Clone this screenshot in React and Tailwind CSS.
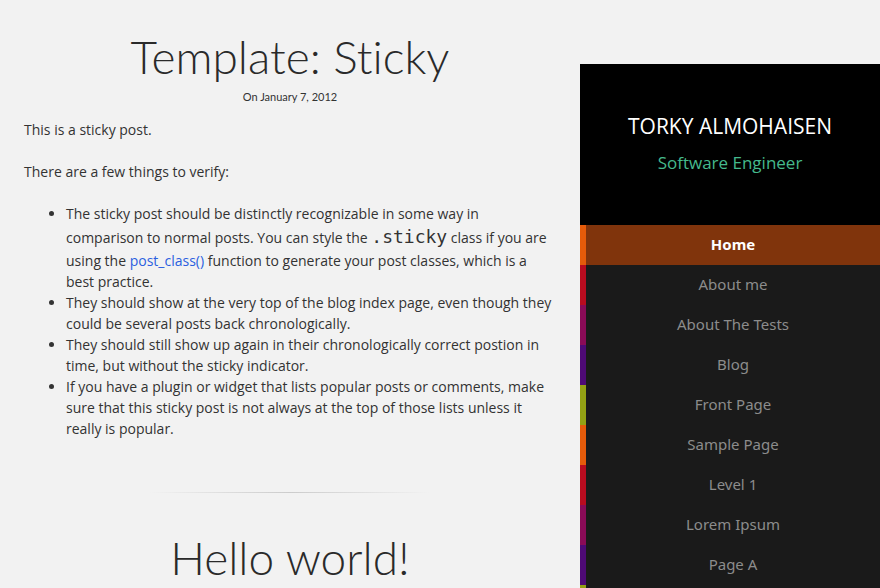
import React from "react";

// Sidebar navigation items with their accent stripe colours
const navItems = [
  { label: "Home", stripe: "bg-[#e55b0a]", active: true },
  { label: "About me", stripe: "bg-[#b80c1f]" },
  { label: "About The Tests", stripe: "bg-[#8a0b57]" },
  { label: "Blog", stripe: "bg-[#4e0a76]" },
  { label: "Front Page", stripe: "bg-[#93a114]" },
  { label: "Sample Page", stripe: "bg-[#e55b0a]" },
  { label: "Level 1", stripe: "bg-[#b80c1f]" },
  { label: "Lorem Ipsum", stripe: "bg-[#8a0b57]" },
  { label: "Page A", stripe: "bg-[#4e0a76]" },
  { label: "Page B", stripe: "bg-[#93a114]" },
];

function Post() {
  return (
    <article className="px-6">
      <h1 className="pt-[29px] text-center text-[46px] leading-[56px] font-light text-[#2a2a2a] font-['Lato',sans-serif] [font-variant-ligatures:none]">
        Template: Sticky
      </h1>
      <div className="mt-[4px] text-center text-[11px] text-[#333] font-['Lato',sans-serif]">
        On January 7, 2012
      </div>
      <div className="mt-[13px] text-[14px] leading-[21px] text-[#333] font-['Open_Sans',sans-serif]">
        <p>This is a sticky post.</p>
        <p className="mt-[21px]">There are a few things to verify:</p>
        <ul className="mt-[21px] list-disc pl-[42px]">
          <li>
            The sticky post should be distinctly recognizable in some way in
            comparison to normal posts. You can style the{" "}
            <code className="text-[18px] leading-[26px] font-['DejaVu_Sans_Mono',monospace]">
              .sticky
            </code>{" "}
            class if you are using the{" "}
            <a className="text-[#2b5fe0]" href="#">
              post_class()
            </a>{" "}
            function to generate your post classes, which is a best practice.
          </li>
          <li>
            They should show at the very top of the blog index page, even
            though they could be several posts back chronologically.
          </li>
          <li>
            They should still show up again in their chronologically correct
            postion in time, but without the sticky indicator.
          </li>
          <li>
            If you have a plugin or widget that lists popular posts or
            comments, make sure that this sticky post is not always at the top
            of those lists unless it really is popular.
          </li>
        </ul>
      </div>
      {/* divider between posts */}
      <div className="mt-[53px] flex justify-center">
        <div className="h-px w-[280px] bg-gradient-to-r from-transparent via-[#cccccc] to-transparent"></div>
      </div>
      <h1 className="mt-[37px] text-center text-[46px] leading-[56px] font-light text-[#2a2a2a] font-['Lato',sans-serif]">
        Hello world!
      </h1>
    </article>
  );
}

function Sidebar() {
  return (
    <aside className="mt-[64px] w-[300px] shrink-0 bg-[#1a1a1a]">
      <div className="h-[161px] bg-black flex flex-col items-center pt-[48px]">
        <div className="text-[21px] leading-[28px] text-white font-['Open_Sans',sans-serif]">
          TORKY ALMOHAISEN
        </div>
        <div className="mt-[11px] text-[17px] leading-[24px] text-[#45b98c] font-['Open_Sans',sans-serif]">
          Software Engineer
        </div>
      </div>
      <nav>
        {navItems.map((item, index) => (
          <div
            key={index}
            className={`flex h-[40px] ${item.active ? "bg-[#80340c]" : "bg-[#1a1a1a]"}`}
          >
            <div className={`w-[6px] ${item.stripe}`}></div>
            <div
              className={`flex-1 flex items-center justify-center pb-[2px] text-[15px] font-['Noto_Sans',sans-serif] ${
                item.active ? "text-white font-bold" : "text-[#8c8c8c]"
              }`}
            >
              {item.label}
            </div>
          </div>
        ))}
      </nav>
    </aside>
  );
}

export default function App() {
  return (
    <div className="h-[588px] w-[880px] overflow-hidden bg-[#f2f2f2] flex">
      <main className="w-[580px] shrink-0">
        <Post />
      </main>
      <Sidebar />
    </div>
  );
}
